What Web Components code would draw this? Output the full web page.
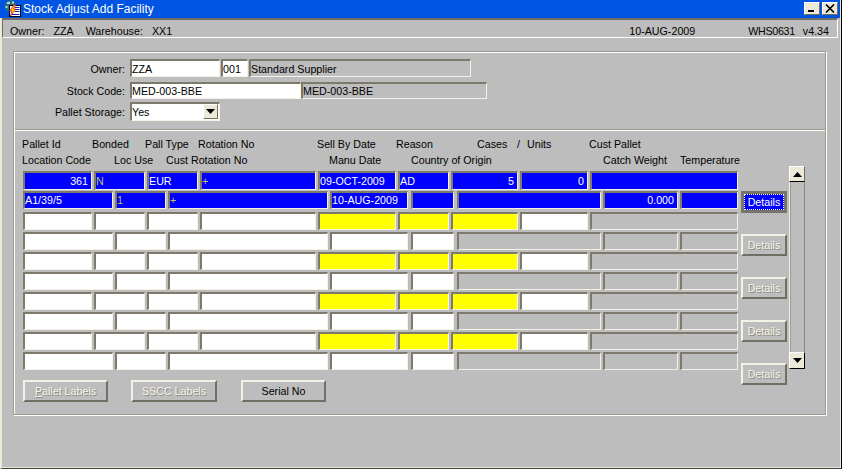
<!DOCTYPE html>
<html><head><meta charset="utf-8"><title>Stock Adjust Add Facility</title>
<style>
html,body{margin:0;padding:0;background:#bdbdbd;}
body{width:842px;height:469px;overflow:hidden;font:10.7px "Liberation Sans",Arial,sans-serif;color:#000;}
</style></head><body>
<wh-window>
  <wh-titlebar slot="title">Stock Adjust Add Facility</wh-titlebar>
  <wh-status slot="status" left="Owner:|ZZA|Warehouse:|XX1" date="10-AUG-2009" form="WHS0631" ver="v4.34"></wh-status>
  <wh-panel>
    <wh-header-form slot="top"></wh-header-form>
    <wh-detail-block slot="bottom"></wh-detail-block>
  </wh-panel>
</wh-window>
<script>
const FONT='"Liberation Sans",Arial,sans-serif';
const FS='10.7px';
function tpl(el,html){el.attachShadow({mode:'open'}).innerHTML=html;}

class WhWindow extends HTMLElement{connectedCallback(){tpl(this,`<style>
:host{display:flex;flex-direction:column;width:842px;height:469px;box-sizing:border-box;background:#bdbdbd;
 border-left:2px solid #ece9d8;border-right:1px solid #000;border-bottom:1px solid #404040;font:${FS} ${FONT};position:relative;padding-right:1px}
.bottom{height:1px;background:#ece9d8;margin-left:-2px;margin-top:auto;}
.main{padding:13px 0 0 11px}
:host::after{content:"";position:absolute;right:0;top:0;bottom:0;width:1px;background:#ece9d8}
</style><slot name="title"></slot><slot name="status"></slot><div class="main"><slot></slot></div><div class="bottom"></div>`);}}

class WhTitlebar extends HTMLElement{connectedCallback(){tpl(this,`<style>
:host{display:flex;align-items:center;height:18px;background:#0054e3;margin-left:-2px;box-sizing:border-box;color:#fff;font:12px ${FONT}}
svg.i{margin:0 2px 0 3px;flex:none}
.t{flex:1}
.b{width:16px;height:13px;box-sizing:border-box;background:#ece9d8;border:1px solid;border-color:#fff #716f64 #716f64 #fff;margin-right:2px;margin-top:-1px;display:flex;align-items:center;justify-content:center;flex:none}
</style>
<svg class="i" width="18" height="18" viewBox="0 0 18 18">
<circle cx="7.500" cy="6" r="5.800" fill="#2f6f82"/><path d="M4 2h3v2H4zM9 1.500h2v2H9zM2.500 6h2v2h-2z" fill="#b5d2d6"/>
<rect x="6.500" y="5.500" width="11" height="11" fill="#fff" stroke="#000" stroke-width="1"/>
<path d="M12 7.500h4.500M12 9.500h4.500M12 11.500h4.500M9 14.500h7.500" stroke="#1a1ab0" stroke-width="1"/>
<path d="M11 5L6.500 11H9l-1.500 5 5.500-7h-2.500l2-4z" fill="#ffd800" stroke="#d01818" stroke-width=".8"/></svg>
<span class="t"><slot></slot></span>
<span class="b"><svg width="10" height="9" viewBox="0 0 10 9"><rect x="1" y="6" width="6" height="2" fill="#000"/></svg></span>
<span class="b"><svg width="10" height="9" viewBox="0 0 10 9"><path d="M1 0.500L9 8.500M9 0.500L1 8.500" stroke="#000" stroke-width="1.600"/></svg></span>`);}}

class WhStatus extends HTMLElement{connectedCallback(){
const l=this.getAttribute('left').split('|');
tpl(this,`<style>
:host{display:flex;align-items:flex-start;height:20px;box-sizing:border-box;border-top:2px solid #716f64;border-left:1px solid #716f64;border-bottom:1px solid #fff;border-right:1px solid #fff;padding:5px 0 0 7px;margin-right:2px;font:${FS} ${FONT}}
span{white-space:nowrap}
</style>
<span>${l[0]}</span><span style="margin-left:9px">${l[1]}</span><span style="margin-left:12px">${l[2]}</span><span style="margin-left:9px">${l[3]}</span>
<span style="margin-left:auto">${this.getAttribute('date')}</span>
<span style="margin-left:53px;letter-spacing:-.3px">${this.getAttribute('form')}</span>
<span style="margin-left:8px;margin-right:8px">${this.getAttribute('ver')}</span>`);}}

class WhPanel extends HTMLElement{connectedCallback(){tpl(this,`<style>
:host{display:block;box-sizing:border-box;width:813px;height:364px;border:1px solid #9e9c8f;box-shadow:1px 1px 0 #fff,inset 1px 1px 0 #fff}
.div{height:2px;border-top:1px solid #9e9c8f;border-bottom:1px solid #fff;box-sizing:border-box;margin-left:1px;margin-top:0}
</style><slot name="top"></slot><div class="div"></div><slot name="bottom"></slot>`);}}

class WhField extends HTMLElement{connectedCallback(){
const k=this.getAttribute('k')||'w', w=this.getAttribute('w'), h=+(this.getAttribute('h')||18), ml=this.getAttribute('ml')||0, a=this.getAttribute('a')||'left', dy=+(this.getAttribute('dy')||0);
const bg={w:'#fff',b:'#0000ff',y:'#ffff00',g:'#bdbdbd'}[k], fg=k==='b'?(this.hasAttribute('dim')?'#c0c060':'#fff'):'#000';
tpl(this,`<style>
:host{display:block;box-sizing:border-box;flex:none;width:${w}px;height:${h}px;margin-left:${ml}px;background:${bg};color:${fg};
border:2px solid;border-color:#7d7a6c #f4f2e6 #f4f2e6 #7d7a6c;border-right-width:1px;border-bottom-width:1px;
font:${FS} ${FONT};line-height:${h-3}px;padding:${dy}px 3px 0 0;text-align:${a};white-space:nowrap;overflow:hidden}
</style><slot></slot>`);}}

class WhButton extends HTMLElement{connectedCallback(){
const s=this.getAttribute('state')||'on';
const w=this.getAttribute('w'),h=this.getAttribute('h')||22;
const c=s==='off'?`color:#f6f4ea;text-shadow:1px 1px 0 #8c8a7e;`:s==='focus'?`color:#fff;`:`color:#000;`;
const inner=s==='focus'?`<span class="f"><slot></slot></span>`:`<slot></slot>`;
tpl(this,`<style>
:host{display:flex;align-items:center;justify-content:center;box-sizing:border-box;flex:none;width:${w}px;height:${h}px;${c}font:${FS} ${FONT};
border:2px solid;border-color:#f4f2e6 #716f64 #716f64 #f4f2e6;background:${s==='focus'?'#0000ff':'#bdbdbd'};white-space:pre;
${s==='focus'?'border:3px solid #77756a;':''}}
.f{display:flex;align-items:center;justify-content:center;width:100%;height:100%;box-sizing:border-box;border:1px dotted #fff}
</style>${inner}`);}}

class WhHeaderForm extends HTMLElement{connectedCallback(){tpl(this,`<style>
:host{display:grid;grid-template-columns:116px 1fr;height:77px;box-sizing:border-box;padding-top:7px;grid-auto-rows:min-content;font:${FS} ${FONT}}
.l{text-align:right;padding:4px 5px 0 0;white-space:nowrap;box-sizing:border-box}
.r{display:flex;}
.r1{height:23px}.r2{height:20px}
.r2.l{padding-top:3px}
.sel{position:relative;width:90px;height:19px}
.dd{position:absolute;right:2px;top:2px;width:15px;height:15px;box-sizing:border-box;background:#ece9d8;border:1px solid;border-color:#fff #716f64 #716f64 #fff;display:flex;align-items:center;justify-content:center}
</style>
<div class="l r1">Owner:</div><div class="r r1"><wh-field w="90" dy="1">ZZA</wh-field><wh-field w="27" ml="1" dy="1">001</wh-field><wh-field w="222" ml="1" k="g" dy="1">Standard Supplier</wh-field></div>
<div class="l r2">Stock Code:</div><div class="r r2"><wh-field w="171" h="17">MED-003-BBE</wh-field><wh-field w="186" k="g" h="17">MED-003-BBE</wh-field></div>
<div class="l">Pallet Storage:</div><div class="r"><div class="sel"><wh-field w="90" h="19">Yes</wh-field><div class="dd"><svg width="9" height="5" viewBox="0 0 9 5"><path d="M0 0h9L4.500 5z" fill="#000"/></svg></div></div></div>`);}}

class WhLabels extends HTMLElement{connectedCallback(){
const items=this.getAttribute('items').split('|').map(s=>s.split('@'));
let h='';
items.forEach((it,i)=>{const x=+it[1],n=i+1<items.length?+items[i+1][1]:x+80;
h+=`<span style="width:${n-x}px">${it[0]}</span>`;});
tpl(this,`<style>
:host{display:flex;height:16px;font:${FS} ${FONT};width:715px}
span{white-space:nowrap;flex:none}
</style>${h}`);}}

class WhScrollbar extends HTMLElement{connectedCallback(){tpl(this,`<style>
:host{display:flex;flex-direction:column;width:16px;height:203px;box-sizing:border-box}
.b{width:16px;height:16px;box-sizing:border-box;background:#ece9d8;border:1px solid;border-color:#fff #716f64 #716f64 #fff;display:flex;align-items:center;justify-content:center;flex:none}
.dn{border-color:#fff #000 #000 #fff;height:17px}
.up{border-bottom-color:#000;border-right-color:#716f64}
.t{flex:1;box-sizing:border-box;border-left:1px solid #f1efe2;border-right:1px solid #8a887a;margin:0;background:#bdbdbd;box-shadow:inset 1px 0 0 #9e9c8f}
</style>
<div class="b up"><svg width="9" height="5" viewBox="0 0 9 5"><path d="M0 5h9L4.500 0z" fill="#000"/></svg></div>
<div class="t"></div>
<div class="b dn"><svg width="9" height="5" viewBox="0 0 9 5"><path d="M0 0h9L4.500 5z" fill="#000"/></svg></div>`);}}

const A=[[69,0],[51,2],[51,2],[116,2],[78,2],[51,2],[67,2],[68,2],[148,2]];
const B=[[90,0],[51,2],[160,2],[78,2],[43,3],[144,3],[75,2],[58,2]];
function row(defs,kinds,texts,h,mt,align,dim){
 return `<div class="row" style="height:${h}px;margin-top:${mt}px">`+defs.map((d,i)=>{
  const t=(texts&&texts[i])||'';const a=(align&&align[i])?' a="right"':'';const di=(dim&&dim[i])?' dim':'';
  return `<wh-field w="${d[0]}" ml="${d[1]}" h="${h}" k="${kinds[i]}"${a}${di}>${t}</wh-field>`;}).join('')+`</div>`;
}
class WhDetailBlock extends HTMLElement{connectedCallback(){
const aK=['w','w','w','w','y','y','y','w','g'], bK=['w','w','w','w','w','g','g','g'];
let rows=row(A,Array(9).fill('b'),['361','N','EUR','+','09-OCT-2009','AD','5','0',''],19,0,{0:1,6:1,7:1},{1:1,3:1});
rows+=row(B,Array(8).fill('b'),['A1/39/5','1','+','10-AUG-2009','','','0.000',''],18,1,{6:1},{1:1,2:1});
for(let i=0;i<4;i++){rows+=row(A,aK,null,18,i===0?3:2);rows+=row(B,bK,null,18,2);}
let det=`<wh-button w="46" h="22" state="focus">Details</wh-button>`;
for(let i=0;i<4;i++)det+=`<wh-button w="46" h="22" state="off">Details</wh-button>`;
tpl(this,`<style>
:host{display:grid;grid-template-columns:715px 46px 16px;column-gap:0;grid-template-rows:35px auto auto;padding:5px 0 0 9px;font:${FS} ${FONT};box-sizing:border-box}
.lab{grid-column:1;grid-row:1;margin:2px 0 0 -1px}
.tbl{grid-column:1;grid-row:2}
.row{display:flex}
.btns{grid-column:1;grid-row:3;display:flex;margin-top:10px}
.det{grid-column:2;grid-row:2/4;display:flex;flex-direction:column;gap:21px;margin:20px 0 0 3px}
.sb{grid-column:3;grid-row:1/3;margin:30px 0 0 5px}
u{text-decoration:underline}
</style>
<div class="lab">
<wh-labels items="Pallet Id@0|Bonded@70|Pall Type@123|Rotation No@176|Sell By Date@295|Reason@374|Cases@455|/@495|Units@505|Cust Pallet@567"></wh-labels>
<wh-labels items="Location Code@0|Loc Use@92|Cust Rotation No@144|Manu Date@307|Country of Origin@389|Catch Weight@581|Temperature@658"></wh-labels>
</div>
<div class="tbl">${rows}</div>
<div class="btns"><wh-button w="85" state="off"><u>P</u>allet Labels</wh-button><wh-button w="86" style="margin-left:23px" state="off">SSCC Labels</wh-button><wh-button w="85" style="margin-left:24px">Serial No</wh-button></div>
<div class="det">${det}</div>
<div class="sb"><wh-scrollbar></wh-scrollbar></div>`);}}

[['wh-window',WhWindow],['wh-titlebar',WhTitlebar],['wh-status',WhStatus],['wh-panel',WhPanel],['wh-field',WhField],['wh-button',WhButton],['wh-header-form',WhHeaderForm],['wh-labels',WhLabels],['wh-scrollbar',WhScrollbar],['wh-detail-block',WhDetailBlock]].forEach(([n,c])=>customElements.define(n,c));
</script>
</body></html>
